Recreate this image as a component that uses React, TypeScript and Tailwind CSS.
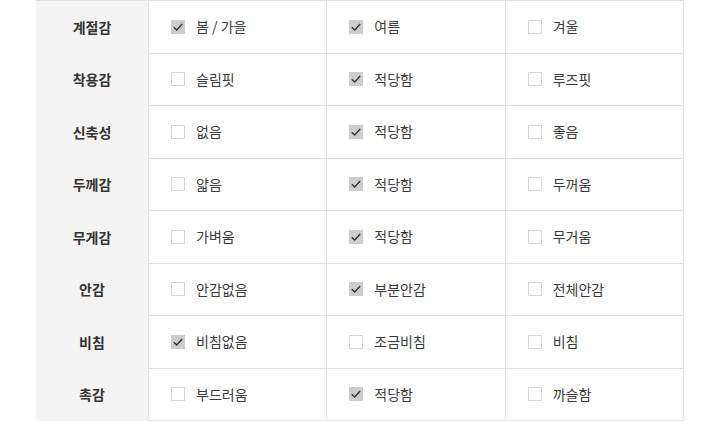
const rows: { label: string; options: [string, boolean][] }[] = [
  { label: "계절감", options: [["봄 / 가을", true], ["여름", true], ["겨울", false]] },
  { label: "착용감", options: [["슬림핏", false], ["적당함", true], ["루즈핏", false]] },
  { label: "신축성", options: [["없음", false], ["적당함", true], ["좋음", false]] },
  { label: "두께감", options: [["얇음", false], ["적당함", true], ["두꺼움", false]] },
  { label: "무게감", options: [["가벼움", false], ["적당함", true], ["무거움", false]] },
  { label: "안감", options: [["안감없음", false], ["부분안감", true], ["전체안감", false]] },
  { label: "비침", options: [["비침없음", true], ["조금비침", false], ["비침", false]] },
  { label: "촉감", options: [["부드러움", false], ["적당함", true], ["까슬함", false]] },
];

function Box({ checked }: { checked: boolean }) {
  if (checked) {
    return (
      <span className="flex h-[14px] w-[14px] items-center justify-center bg-[#cdcdcd]">
        <svg width="12" height="12" viewBox="0 0 12 12" fill="none">
          <path d="M1.8 6.2 L4.7 9 L10.2 3" stroke="#333" strokeWidth="1.4" />
        </svg>
      </span>
    );
  }
  return <span className="h-[14px] w-[14px] border border-[#d6d6d6] bg-white" />;
}

export default function App() {
  return (
    <div className="h-[421px] w-[720px] overflow-hidden bg-white px-[36px]" style={{ fontFamily: '"Noto Sans CJK KR", "Noto Sans", sans-serif' }}>
      <div className="grid w-[648px] grid-cols-[112px_1fr] border-t border-[#e0e0e0]">
        <div className="flex flex-col bg-[#f4f4f4]">
          {rows.map((r) => (
            <div key={r.label} className="flex h-[52.5px] items-center justify-center text-[14px] font-bold text-[#333]">
              {r.label}
            </div>
          ))}
        </div>
        <div className="flex flex-col border-r border-[#e0e0e0]">
          {rows.map((r) => (
            <div key={r.label} className="grid h-[52.5px] grid-cols-3 border-b border-[#e0e0e0]">
              {r.options.map(([text, checked], i) => (
                <div key={i} className="flex items-center gap-[11px] border-l border-[#e0e0e0] pl-[22px] text-[14px] text-[#3a3a3a]">
                  <Box checked={checked} />
                  <span>{text}</span>
                </div>
              ))}
            </div>
          ))}
        </div>
      </div>
    </div>
  );
}
